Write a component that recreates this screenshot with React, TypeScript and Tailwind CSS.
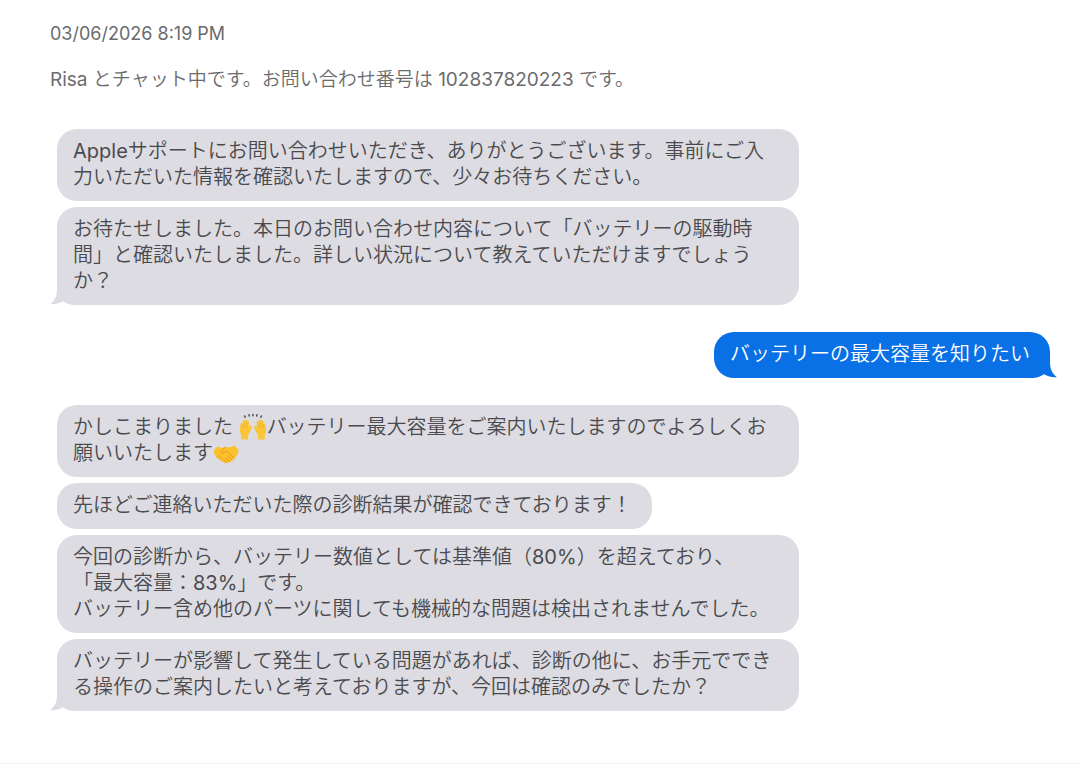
import type { ReactNode } from "react";

type Side = "agent" | "customer";

function RaisedHands() {
  return (
    <svg viewBox="0 0 28 28" className="-mt-2 -mb-1 inline-block h-7 w-7 align-middle" role="img" aria-label="🙌">
      <path
        d="M6.2 4.2l-.6-1.2M10.3 3l-.3-1.3M14 2.7V1.500M17.7 3l.3-1.3M21.8 4.2l.6-1.2"
        fill="none"
        stroke="#55504d"
        strokeWidth="1.500"
        strokeLinecap="round"
      />
      <g id="hand">
        <path
          d="M2.2 26.5c.3-2.600.1-4.300-.7-6.200C.6 18 .9 14.500 1.700 11c.3-1.400 1.700-1.300 1.700 0l.2-2.700c.1-1.500 2-1.500 2 0l.2-1c.2-1.300 2.100-1.200 2.100.2l.3.9c.5-1.100 2-.8 2 .6l.2 5.500c.4-1.100 1-1.900 1.700-2 .8 0 1 .7.7 1.700-.7 2.300-1.300 4.600-2.700 6-.9.9-1.200 3.500-1.200 6.300z"
          fill="#fbc53a"
        />
        <path d="M3.500 11.500v4M5.700 9.500v5.500M7.900 9.500v5.500" stroke="#eba92c" strokeWidth=".6" fill="none" />
      </g>
      <use href="#hand" transform="matrix(-1 0 0 1 28 0)" />
    </svg>
  );
}

function Handshake() {
  return (
    <svg viewBox="0 0 26 26" className="-my-1 inline-block h-[26px] w-[26px] align-middle" role="img" aria-label="🤝">
      <path
        d="M.8 8.200L4.500 4.600 9 5.900l3.400-.8 4.300.3 4.700-1.800 3.900 4.200c.3 2.700-.5 4.900-2.700 7.300l-1.300 1.500c-.2 1.300-1.200 1.900-2.200 1.700-.3 1.300-1.500 1.800-2.500 1.300-.6 1.300-1.900 1.600-2.900.8-.8 1-2 1-3 .2l-6.500-4.900C2.200 14.400.8 11.700.8 8.200z"
        fill="#fcc02a"
      />
      <path
        d="M12.400 5.100L8.300 9.600c-.3 1.400 1.700 2.100 3.100.9l2-1.500 7.900 7.100M13.700 20.400l-2.200-1.900M16.600 19.600l-3.400-3.100M19.100 18.300l-3.800-3.600M4.100 15.500l2-2M6.300 17.100l1.900-2M8.700 18.900l1.600-1.700"
        fill="none"
        stroke="#e0921c"
        strokeWidth=".8"
        strokeLinecap="round"
        strokeLinejoin="round"
      />
    </svg>
  );
}

function Tail({ side }: { side: Side }) {
  return (
    <svg
      viewBox="0 0 26 24"
      aria-hidden="true"
      className={
        side === "agent"
          ? "absolute bottom-0 -left-[7px] h-6 w-[26px] text-[#dddce2]"
          : "absolute -right-[7px] bottom-0 h-6 w-[26px] -scale-x-100 text-[#0a70e6]"
      }
    >
      <path d="M0 0h13l13 24H0z" fill="#fff" />
      <path d="M7 0v8c0 7-2 11.500-7 15.200 5 .3 9-.6 13-3C16.500 22.600 20 24 26 24V0z" fill="currentColor" />
    </svg>
  );
}

interface BubbleProps {
  side: Side;
  tail?: boolean;
  wide?: boolean;
  children: ReactNode;
}

function Bubble({ side, tail = false, wide = false, children }: BubbleProps) {
  const width = wide ? "w-full" : "w-fit";
  const tone = side === "agent" ? "bg-[#dddce2] text-[#4a4a4e]" : "self-end bg-[#0a70e6] text-white";
  return (
    <li className={`relative max-w-[742px] rounded-[20px] pt-[9px] pr-5 pb-[11px] pl-4 ${width} ${tone}`}>
      {tail && <Tail side={side} />}
      <p className="relative whitespace-pre-line">{children}</p>
    </li>
  );
}

export default function App() {
  return (
    <main
      lang="ja"
      className="flex min-h-screen flex-col border-b border-[#f6f6f6] bg-white pt-[21px] pr-[30px] pb-10 pl-[50px] font-['Inter','Noto_Sans_CJK_JP_DemiLight','Noto_Sans_CJK_JP',sans-serif] font-normal"
    >
      <header className="flex flex-col gap-5 leading-[26px] text-[#6b6b6e]">
        <time dateTime="2026-03-06T20:19" className="text-[18px] leading-[26px]">
          03/06/2026 8:19 PM
        </time>
        <p className="text-[19px] leading-[26px]">Risa とチャット中です。お問い合わせ番号は 102837820223 です。</p>
      </header>

      <section aria-label="チャット" className="mt-9 flex flex-col gap-[27px] pl-[7px] text-[20px] leading-[26px]">
        <ul className="flex flex-col gap-[6px]">
          <Bubble side="agent">
            Appleサポートにお問い合わせいただき、ありがとうございます。事前にご入力いただいた情報を確認いたしますので、少々お待ちください。
          </Bubble>
          <Bubble side="agent" tail>
            お待たせしました。本日のお問い合わせ内容について「バッテリーの駆動時間」と確認いたしました。詳しい状況について教えていただけますでしょうか？
          </Bubble>
        </ul>
        <ul className="flex flex-col gap-[6px]">
          <Bubble side="customer" tail>
            バッテリーの最大容量を知りたい
          </Bubble>
        </ul>
        <ul className="flex flex-col gap-[6px]">
          <Bubble side="agent">
            かしこまりました <RaisedHands />
            バッテリー最大容量をご案内いたしますのでよろしくお願いいたします
            <Handshake />
          </Bubble>
          <Bubble side="agent">先ほどご連絡いただいた際の診断結果が確認できております！</Bubble>
          <Bubble side="agent" wide>
            {"今回の診断から、バッテリー数値としては基準値（80%）を超えており、\n「最大容量：83%」です。\nバッテリー含め他のパーツに関しても機械的な問題は検出されませんでした。"}
          </Bubble>
          <Bubble side="agent" tail>
            バッテリーが影響して発生している問題があれば、診断の他に、お手元でできる操作のご案内したいと考えておりますが、今回は確認のみでしたか？
          </Bubble>
        </ul>
      </section>
    </main>
  );
}
